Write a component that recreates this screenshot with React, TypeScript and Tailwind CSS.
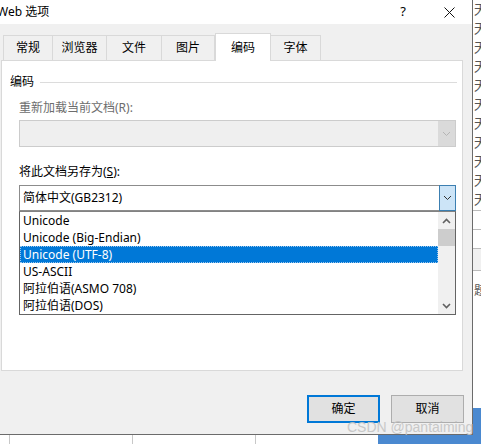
import React from 'react';

const font = { fontFamily: '"Noto Sans", "Noto Sans CJK SC", sans-serif' };

const tabs = [
  { label: '常规', w: 'w-[50px]' },
  { label: '浏览器', w: 'w-[54px]' },
  { label: '文件', w: 'w-[55px]' },
  { label: '图片', w: 'w-[53px]' },
  { label: '编码', w: 'w-[56px]', active: true },
  { label: '字体', w: 'w-[50px]' },
];

const items = [
  'Unicode',
  'Unicode (Big-Endian)',
  'Unicode (UTF-8)',
  'US-ASCII',
  '阿拉伯语(ASMO 708)',
  '阿拉伯语(DOS)',
];

function Chevron({ color, up = false, bold = false }: { color: string; up?: boolean; bold?: boolean }) {
  return (
    <svg width="9" height="6" viewBox="0 0 9 6" fill="none">
      <path
        d={up ? 'M1 5L4.5 1.5L8 5' : 'M1 1L4.5 4.5L8 1'}
        stroke={color}
        strokeWidth={bold ? 1.6 : 1}
      />
    </svg>
  );
}

export default function App() {
  return (
    <div className="relative w-[481px] h-[444px] overflow-hidden bg-white text-[12px] text-black" style={font}>
      <div className="flex h-[435px]">
        {/* Dialog */}
        <div className="w-[473px] h-[435px] bg-[#f0f0f0] border-r border-b border-[#6b6b6b] flex flex-col">
          {/* Title bar */}
          <div className="h-[24px] bg-white flex items-center">
            <span className="ml-[-3px] text-[12px]">Web 选项</span>
            <span className="ml-auto mr-[38px] text-[13px]">?</span>
            <svg width="11" height="11" viewBox="0 0 11 11" className="mr-[17px]">
              <path d="M0.5 0.5L10.5 10.5M10.5 0.5L0.5 10.5" stroke="#111" strokeWidth="1" />
            </svg>
          </div>

          {/* Tabs */}
          <div className="flex items-end h-[36px] pl-[3px]">
            {tabs.map((t) =>
              t.active ? (
                <div
                  key={t.label}
                  className={`${t.w} h-[28px] mb-[-1px] bg-white border border-b-0 border-[#d9d9d9] flex items-center justify-center relative z-10`}
                >
                  {t.label}
                </div>
              ) : (
                <div
                  key={t.label}
                  className={`${t.w} h-[25px] border border-l-0 first:border-l border-b-0 border-[#d9d9d9] flex items-center justify-center`}
                >
                  {t.label}
                </div>
              )
            )}
          </div>

          {/* Panel */}
          <div className="ml-[1px] mr-[9px] h-[311px] bg-white border border-[#d9d9d9] flex flex-col">
            <div className="flex items-center pl-[8px] pr-[5px] mt-[13px] h-[16px]">
              <span>编码</span>
              <div className="flex-1 h-px bg-[#dcdcdc] ml-[6px]" />
            </div>

            <div className="pl-[17px] pr-[6px] flex flex-col">
              <div className="mt-[10px] h-[16px] leading-[16px] text-[#6d6d6d]">重新加载当前文档(R):</div>
              <div className="mt-[4px] h-[27px] bg-[#efefef] border border-[#cccccc] flex">
                <div className="flex-1" />
                <div className="w-[17px] bg-[#dadada] flex items-center justify-center">
                  <Chevron color="#b5b5b5" />
                </div>
              </div>

              <div className="mt-[17px] h-[16px] leading-[16px]">
                将此文档另存为(<span className="underline">S</span>):
              </div>
              <div className="mt-[5px] h-[26px] bg-white border border-[#8c8c8c] flex items-center">
                <span className="flex-1 pl-[3px]">简体中文(GB2312)</span>
                <div className="w-[17px] h-[26px] mr-[-1px] bg-[#cce4f7] border border-[#3c7fb1] flex items-center justify-center">
                  <Chevron color="#333" />
                </div>
              </div>

              {/* Drop-down list */}
              <div className="h-[104px] border border-[#646464] border-t-[#828282] bg-white flex">
                <div className="flex-1 flex flex-col">
                  {items.map((it) =>
                    it === 'Unicode (UTF-8)' ? (
                      <div
                        key={it}
                        className="h-[17px] leading-[15px] bg-[#0078d7] text-white pl-[2px] border border-dotted border-[#9cc7ee]"
                      >
                        {it}
                      </div>
                    ) : (
                      <div key={it} className="h-[17px] leading-[17px] pl-[3px]">
                        {it}
                      </div>
                    )
                  )}
                </div>
                <div className="w-[17px] bg-[#f0f0f0] flex flex-col">
                  <div className="h-[17px] flex items-center justify-center">
                    <Chevron color="#606060" up bold />
                  </div>
                  <div className="h-[17px] bg-[#cdcdcd]" />
                  <div className="flex-1" />
                  <div className="h-[17px] flex items-center justify-center">
                    <Chevron color="#606060" bold />
                  </div>
                </div>
              </div>
            </div>
          </div>

          {/* Buttons */}
          <div className="flex justify-end gap-[11px] mt-[24px] mr-[8px]">
            <button className="w-[73px] h-[28px] bg-[#e1e1e1] border-2 border-[#0078d7] text-[12px]">确定</button>
            <button className="w-[73px] h-[28px] bg-[#e1e1e1] border border-[#adadad] text-[12px]">取消</button>
          </div>
        </div>

        {/* Background window behind the dialog, right edge */}
        <div className="flex-1 flex flex-col overflow-hidden">
          <div className="h-[210px] flex flex-col overflow-hidden">
            {Array.from({ length: 11 }).map((_, i) => (
              <div key={i} className="h-[19px] leading-[19px] text-[13px] text-[#555] pl-[1px] whitespace-nowrap">
                天
              </div>
            ))}
          </div>
          <div className="h-[19px] border-t border-[#bbb]" />
          <div className="h-[19px] border-t border-[#bbb]" />
          <div className="h-[22px] border-t border-[#bbb] bg-[#f0f0f0]" />
          <div className="h-[40px] border-t border-[#bbb] text-[12px] text-[#555] pl-[1px] leading-[40px] whitespace-nowrap">题</div>
          <div className="h-[98px] bg-white" />
          <div className="flex-1 bg-[#4a89d0]" />
        </div>
      </div>

      {/* Strip below dialog */}
      <div className="h-[9px] flex">
        <div className="w-[10px] border-r border-[#c8c8c8]" />
        <div className="w-[123px] border-r border-[#c8c8c8]" />
        <div className="w-[123px] border-r border-[#c8c8c8]" />
        <div className="w-[122px]" />
        <div className="flex-1 bg-[#4a89d0]" />
      </div>

      {/* Watermark */}
      <div
        className="absolute left-[347px] top-[419px] text-[14px] leading-[16px] text-[#c4c4c4] opacity-90 whitespace-nowrap"
        style={{ fontFamily: '"Liberation Sans", Arial, sans-serif' }}
      >
        CSDN @pantaiming
      </div>
    </div>
  );
}
